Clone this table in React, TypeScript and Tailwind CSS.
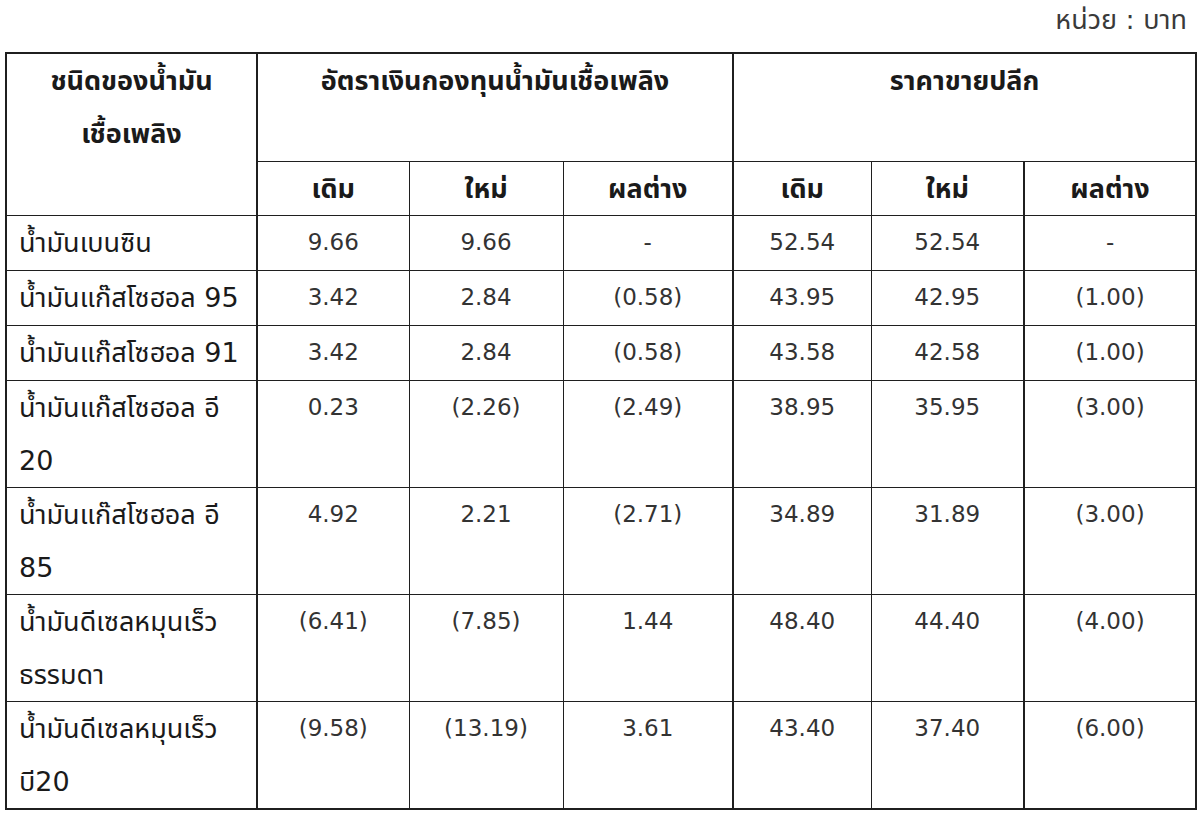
const font = "font-['Tahoma','DejaVu_Sans','Noto_Sans','Noto_Sans_Thai','Loma','Garuda',sans-serif]";

type Row = {
  name: string[];
  fund: [string, string, string];
  retail: [string, string, string];
};

const rows: Row[] = [
  { name: ["น้ำมันเบนซิน"], fund: ["9.66", "9.66", "-"], retail: ["52.54", "52.54", "-"] },
  { name: ["น้ำมันแก๊สโซฮอล 95"], fund: ["3.42", "2.84", "(0.58)"], retail: ["43.95", "42.95", "(1.00)"] },
  { name: ["น้ำมันแก๊สโซฮอล 91"], fund: ["3.42", "2.84", "(0.58)"], retail: ["43.58", "42.58", "(1.00)"] },
  { name: ["น้ำมันแก๊สโซฮอล อี", "20"], fund: ["0.23", "(2.26)", "(2.49)"], retail: ["38.95", "35.95", "(3.00)"] },
  { name: ["น้ำมันแก๊สโซฮอล อี", "85"], fund: ["4.92", "2.21", "(2.71)"], retail: ["34.89", "31.89", "(3.00)"] },
  { name: ["น้ำมันดีเซลหมุนเร็ว", "ธรรมดา"], fund: ["(6.41)", "(7.85)", "1.44"], retail: ["48.40", "44.40", "(4.00)"] },
  { name: ["น้ำมันดีเซลหมุนเร็ว", "บี20"], fund: ["(9.58)", "(13.19)", "3.61"], retail: ["43.40", "37.40", "(6.00)"] },
];

const cell = "border border-[#1f1f1f] align-top p-0";
const head = `${cell} text-center font-bold text-[27px]`;

export default function App() {
  return (
    <div className={`w-[1200px] h-[820px] bg-white px-[5px] text-[23px] leading-[53px] text-[#1a1a1a] ${font}`}>
      <div className="h-[52px] text-right pr-[8px] text-[27px] leading-[40px] text-[#3a3a3a]">หน่วย : บาท</div>

      <table className="w-[1190px] table-fixed border-collapse border-2 border-[#1f1f1f]">
        <colgroup>
          <col className="w-[251px]" />
          <col className="w-[152px]" />
          <col className="w-[154px]" />
          <col className="w-[170px]" />
          <col className="w-[138px]" />
          <col className="w-[153px]" />
          <col className="w-[172px]" />
        </colgroup>
        <thead>
          <tr className="h-[108px]">
            <th rowSpan={2} className={`${head} border-r-2`}>
              <div>ชนิดของน้ำมัน</div>
              <div>เชื้อเพลิง</div>
            </th>
            <th colSpan={3} className={`${head} border-r-2`}>
              อัตราเงินกองทุนน้ำมันเชื้อเพลิง
            </th>
            <th colSpan={3} className={head}>
              ราคาขายปลีก
            </th>
          </tr>
          <tr className="h-[54px]">
            <th className={head}>เดิม</th>
            <th className={head}>ใหม่</th>
            <th className={`${head} border-r-2`}>ผลต่าง</th>
            <th className={head}>เดิม</th>
            <th className={`${head} border-r-2`}>ใหม่</th>
            <th className={head}>ผลต่าง</th>
          </tr>
        </thead>
        <tbody className="text-[#333]">
          {rows.map((r, i) => (
            <tr key={i} className={r.name.length > 1 ? "h-[107px]" : "h-[55px]"}>
              <td className={`${cell} border-r-2 pl-[12px] whitespace-nowrap text-[27px] text-[#1a1a1a]`}>
                {r.name.map((line, j) => (
                  <div key={j}>{line}</div>
                ))}
              </td>
              <td className={`${cell} text-center`}>{r.fund[0]}</td>
              <td className={`${cell} text-center`}>{r.fund[1]}</td>
              <td className={`${cell} border-r-2 text-center`}>{r.fund[2]}</td>
              <td className={`${cell} text-center`}>{r.retail[0]}</td>
              <td className={`${cell} border-r-2 text-center`}>{r.retail[1]}</td>
              <td className={`${cell} text-center`}>{r.retail[2]}</td>
            </tr>
          ))}
        </tbody>
      </table>
    </div>
  );
}
